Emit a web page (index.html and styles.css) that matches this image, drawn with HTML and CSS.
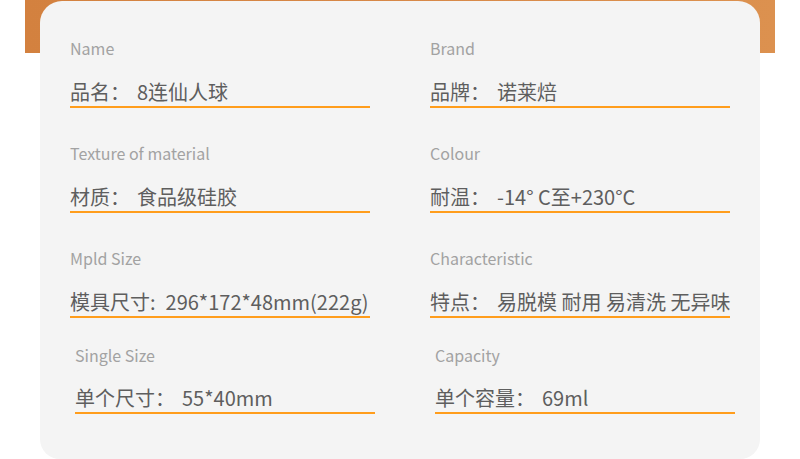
FILE: index.html
```html
<!DOCTYPE html>
<html lang="zh">
<head>
<meta charset="utf-8">
<title>产品参数</title>
<link rel="stylesheet" href="styles.css">
</head>
<body>
<div class="page">
  <div class="banner"></div>
  <div class="card">
    <div class="field">
      <div class="label">Name</div>
      <div class="value"><span class="key">品名：</span>8连仙人球</div>
    </div>
    <div class="field">
      <div class="label">Brand</div>
      <div class="value"><span class="key">品牌：</span>诺莱焙</div>
    </div>
    <div class="field">
      <div class="label">Texture of material</div>
      <div class="value"><span class="key">材质：</span>食品级硅胶</div>
    </div>
    <div class="field">
      <div class="label">Colour</div>
      <div class="value"><span class="key">耐温：</span>-14° C至+230°C</div>
    </div>
    <div class="field">
      <div class="label">Mpld Size</div>
      <div class="value"><span class="key tight">模具尺寸:</span>296*172*48mm(222g)</div>
    </div>
    <div class="field">
      <div class="label">Characteristic</div>
      <div class="value"><span class="key">特点：</span>易脱模 耐用 易清洗 无异味</div>
    </div>
    <div class="field shift">
      <div class="label">Single Size</div>
      <div class="value"><span class="key">单个尺寸：</span>55*40mm</div>
    </div>
    <div class="field shift">
      <div class="label">Capacity</div>
      <div class="value"><span class="key">单个容量：</span>69ml</div>
    </div>
  </div>
</div>
</body>
</html>
```
FILE: styles.css
```css
html, body {
  margin: 0;
  padding: 0;
  background: #ffffff;
}

body {
  font-family: "Noto Sans CJK SC", "Noto Sans", sans-serif;
  width: 800px;
  height: 459px;
  overflow: hidden;
}

.page {
  padding: 0 25px;
}

.banner {
  height: 53px;
  background: linear-gradient(90deg, #d3813f 0%, #d78847 50%, #dc914f 100%);
}

.card {
  margin: -52px 15px 0;
  height: 458px;
  box-sizing: border-box;
  background: #f4f4f4;
  border-radius: 22px 22px 20px 20px;
  padding: 37px 30px 0;
  display: grid;
  grid-template-columns: 300px 300px;
  column-gap: 60px;
  row-gap: 35px;
  align-content: start;
}

.field {
  display: flex;
  flex-direction: column;
}

.field.shift {
  margin: -8px -5px 0 5px;
}

.label {
  font-size: 16px;
  line-height: 20px;
  color: #a2a2a2;
  margin-bottom: 20px;
}

.field.shift .label {
  margin-bottom: 19px;
}

.value {
  font-size: 20px;
  line-height: 28px;
  color: #5e5e5e;
  border-bottom: 2px solid #ff9d1c;
  white-space: nowrap;
}

.key {
  margin-right: 7px;
}

.key.tight {
  margin-right: 10px;
}
```
